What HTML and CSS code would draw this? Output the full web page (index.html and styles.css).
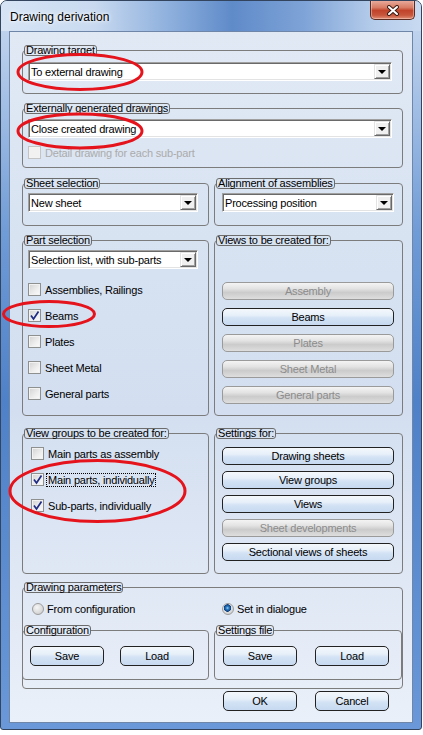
FILE: index.html
```html
<!DOCTYPE html>
<html lang="en">
  <head>
    <meta charset="utf-8">
    <link rel="stylesheet" href="styles.css">
    <title>Drawing derivation</title>
  </head>
  <body>
    <div class="window">
      <div class="titlebar">
        <span class="title">Drawing derivation</span>
        <div class="close">
          <svg width="14" height="11" viewBox="0 0 14 11">
            <path d="M3 2 L11 9 M11 2 L3 9" stroke="#3b1d15" stroke-width="4" stroke-linecap="round"/>
            <path d="M3 2 L11 9 M11 2 L3 9" stroke="#ffffff" stroke-width="2" stroke-linecap="round"/>
          </svg>
        </div>
      </div>

      <div class="client">
        <fieldset class="group target">
          <legend>Drawing target</legend>
          <div class="gbody">
            <div class="combo"><span>To external drawing</span><i class="drop"></i></div>
          </div>
        </fieldset>

        <fieldset class="group external">
          <legend>Externally generated drawings</legend>
          <div class="gbody">
            <div class="combo"><span>Close created drawing</span><i class="drop"></i></div>
            <label class="check disabled"><span class="box"></span>Detail drawing for each sub-part</label>
          </div>
        </fieldset>

        <div class="pair row-sheet">
          <fieldset class="group">
            <legend>Sheet selection</legend>
            <div class="gbody left">
              <div class="combo"><span>New sheet</span><i class="drop"></i></div>
            </div>
          </fieldset>
          <fieldset class="group">
            <legend>Alignment of assemblies</legend>
            <div class="gbody right">
              <div class="combo"><span>Processing position</span><i class="drop"></i></div>
            </div>
          </fieldset>
        </div>

        <div class="pair row-parts">
          <fieldset class="group">
            <legend>Part selection</legend>
            <div class="gbody left">
              <div class="combo"><span>Selection list, with sub-parts</span><i class="drop"></i></div>
              <div class="checks parts">
                <label class="check"><span class="box"></span>Assemblies, Railings</label>
                <label class="check"><span class="box on"><svg width="11" height="11" viewBox="0 0 11 11"><path d="M2 5.5 L4.5 9 L9.5 1.5" fill="none" stroke="#1f2c86" stroke-width="1.7"/></svg></span>Beams</label>
                <label class="check"><span class="box"></span>Plates</label>
                <label class="check"><span class="box"></span>Sheet Metal</label>
                <label class="check"><span class="box"></span>General parts</label>
              </div>
            </div>
          </fieldset>
          <fieldset class="group">
            <legend>Views to be created for:</legend>
            <div class="gbody right buttons views">
              <div class="btn off">Assembly</div>
              <div class="btn">Beams</div>
              <div class="btn off">Plates</div>
              <div class="btn off">Sheet Metal</div>
              <div class="btn off">General parts</div>
            </div>
          </fieldset>
        </div>

        <div class="pair row-groups">
          <fieldset class="group">
            <legend>View groups to be created for:</legend>
            <div class="gbody left wide">
              <div class="checks groups">
                <label class="check"><span class="box"></span>Main parts as assembly</label>
                <label class="check"><span class="box on"><svg width="11" height="11" viewBox="0 0 11 11"><path d="M2 5.5 L4.5 9 L9.5 1.5" fill="none" stroke="#1f2c86" stroke-width="1.7"/></svg></span><span class="focus">Main parts, individually</span></label>
                <label class="check"><span class="box on"><svg width="11" height="11" viewBox="0 0 11 11"><path d="M2 5.5 L4.5 9 L9.5 1.5" fill="none" stroke="#1f2c86" stroke-width="1.7"/></svg></span>Sub-parts, individually</label>
              </div>
            </div>
          </fieldset>
          <fieldset class="group">
            <legend>Settings for:</legend>
            <div class="gbody right buttons settings">
              <div class="btn">Drawing sheets</div>
              <div class="btn">View groups</div>
              <div class="btn">Views</div>
              <div class="btn off">Sheet developments</div>
              <div class="btn">Sectional views of sheets</div>
            </div>
          </fieldset>
        </div>

        <fieldset class="group params">
          <legend>Drawing parameters</legend>
          <div class="gbody">
            <div class="radios">
              <label class="opt"><span class="radio"></span>From configuration</label>
              <label class="opt"><span class="radio on"></span>Set in dialogue</label>
            </div>
            <div class="pair sub">
              <fieldset class="group">
                <legend>Configuration</legend>
                <div class="gbody pairbtns first">
                  <div class="btn big">Save</div>
                  <div class="btn big">Load</div>
                </div>
              </fieldset>
              <fieldset class="group">
                <legend>Settings file</legend>
                <div class="gbody pairbtns">
                  <div class="btn big">Save</div>
                  <div class="btn big">Load</div>
                </div>
              </fieldset>
            </div>
          </div>
        </fieldset>

        <div class="pair footer">
          <div></div>
          <div class="pairbtns">
            <div class="btn big">OK</div>
            <div class="btn big">Cancel</div>
          </div>
        </div>
      </div>
    </div>

    <!-- red hand-drawn marks over the dialog -->
    <svg class="marks" width="423" height="735" viewBox="0 0 423 735">
      <g fill="none" stroke="#e5131b" stroke-width="3">
        <ellipse cx="80" cy="72" rx="62" ry="17.5"/>
        <ellipse cx="80" cy="131" rx="62" ry="17"/>
        <ellipse cx="49" cy="314" rx="45.5" ry="12.5"/>
        <ellipse cx="97.5" cy="491" rx="87.5" ry="30.5"/>
      </g>
    </svg>
  </body>
</html>
```

FILE: styles.css
```css
body{
  margin: 0;
  background: #ffffff;
  font-family: "Liberation Sans", Arial, sans-serif;
  font-size: 11px;
  letter-spacing: -0.2px;
  color: #000000;
}
.window{
  width: 422px;
  height: 730px;
  box-sizing: border-box;
  border: 1px solid #33445e;
  border-radius: 7px 7px 3px 3px;
  background: linear-gradient(#c9daef 0, #b4cbea 8%, #6f9bd6 32%, #4f81c8 55%, #6a98d8 100%);
  display: flex;
  flex-direction: column;
  overflow: hidden;
}
.titlebar{
  height: 30px;
  flex: none;
  display: flex;
  align-items: flex-start;
  justify-content: space-between;
  background: linear-gradient(to right, #d6e4f5 0%, #c9daf0 22%, #8eb0dd 40%, #5f8bc9 55%, #7ea3d7 72%, #b3cbea 88%, #c8daf1 100%);
}
.title{
  font-size: 12px;
  letter-spacing: 0;
  padding: 9px 0 0 9px;
  text-shadow: 0 0 6px #ffffff, 0 0 3px #ffffff;
}
.close{
  width: 45px;
  height: 20px;
  margin-right: 6px;
  margin-top: -1px;
  box-sizing: border-box;
  border: 1px solid #5a2b20;
  border-top: none;
  border-radius: 0 0 5px 5px;
  background: linear-gradient(#eab0a2 0%, #d87b64 40%, #c1432a 55%, #c8563c 80%, #e08f76 100%);
  box-shadow: inset 0 0 0 1px rgba(255,220,210,.45);
  display: flex;
  align-items: center;
  justify-content: center;
  padding-top: 2px;
}
.client{
  flex: 1;
  margin: 0 8px 6px 8px;
  border: 1px solid #6f86a8;
  background: linear-gradient(#e1e9f5 0%, #d6e2f1 35%, #d3dff0 55%, #e0e8f5 80%, #eaf0f9 100%);
  padding: 13px 9px 0 12px;
}

/* group boxes */
.group{
  margin: 0;
  padding: 0;
  min-width: 0;
  border: 1px solid #7c7c7c;
  border-radius: 4px;
}
.group legend{
  margin-left: 1px;
  padding: 0 1px;
  border: 1px solid #6c6c6c;
  border-radius: 3px;
  line-height: 9px;
  font-size: 11px;
}
.gbody{
  padding: 0 10px 0 5px;
}
.gbody.right{
  padding: 0 8px 0 7px;
}
.gbody.wide{
  padding-left: 8px;
}
.target .gbody{
  padding-top: 6px;
  padding-bottom: 12px;
}
.external{
  margin-top: 9px;
}
.external .gbody{
  padding-top: 5px;
  padding-bottom: 8px;
}
.external .check{
  margin-top: 8px;
}
.pair{
  display: grid;
  grid-template-columns: 187px 1fr;
  column-gap: 5px;
}
.row-sheet{
  margin-top: 10px;
}
.row-sheet .gbody{
  padding-top: 4px;
  padding-bottom: 13px;
}
.row-parts{
  margin-top: 9px;
}
.row-parts .left{
  padding-top: 4px;
  padding-bottom: 15px;
}
.row-groups{
  margin-top: 12px;
}
.row-groups .gbody{
  padding-top: 8px;
}
.row-groups .settings{
  padding-bottom: 12px;
}

/* combobox */
.combo{
  height: 19px;
  box-sizing: border-box;
  border: 1px solid;
  border-color: #a0a0a0 #ffffff #ffffff #a0a0a0;
  box-shadow: inset 1px 1px 0 #6a6a6a, inset -1px -1px 0 #e3e3e3;
  background: #ffffff;
  display: flex;
  align-items: center;
  padding-left: 2px;
}
.drop{
  margin-left: auto;
  margin-right: 1px;
  width: 16px;
  height: 15px;
  box-sizing: border-box;
  border: 1px solid;
  border-color: #e3e3e3 #696969 #696969 #e3e3e3;
  box-shadow: inset 1px 1px 0 #ffffff, inset -1px -1px 0 #a0a0a0;
  background: #f0f0f0;
  display: flex;
  align-items: center;
  justify-content: center;
}
.drop::after{
  content: "";
  border-left: 4px solid transparent;
  border-right: 4px solid transparent;
  border-top: 4px solid #000000;
  margin-top: 1px;
}

/* checkboxes */
.checks{
  display: flex;
  flex-direction: column;
}
.checks.parts{
  margin-top: 14px;
  gap: 13px;
}
.checks.groups{
  gap: 13px;
}
.check{
  display: flex;
  align-items: center;
  height: 13px;
  white-space: nowrap;
}
.box{
  width: 13px;
  height: 13px;
  flex: none;
  box-sizing: border-box;
  border: 1px solid #8e8f8f;
  background: linear-gradient(135deg, #d2d2d2 0%, #eeeeee 60%, #fbfbfb 100%);
  box-shadow: inset 0 0 0 1px #f2f2f2;
  margin-right: 4px;
  display: flex;
  align-items: center;
  justify-content: center;
}
.box svg{
  display: block;
}
.check.disabled{
  color: #ababab;
}
.check.disabled .box{
  border-color: #c4c4c4;
  background: #f1f1f1;
}
.focus{
  outline: 1px dotted #000000;
  outline-offset: 0;
  padding: 0 1px;
  margin-left: -1px;
}

/* buttons */
.buttons{
  display: flex;
  flex-direction: column;
}
.gbody.views{
  padding-top: 36px;
  gap: 8px;
}
.gbody.settings{
  gap: 6px;
}
.btn{
  height: 18px;
  box-sizing: border-box;
  border: 1px solid #222222;
  border-radius: 5px;
  background: linear-gradient(#f4f8fc 0%, #e6eff9 40%, #d4e3f5 55%, #c6d9f0 100%);
  display: flex;
  align-items: center;
  justify-content: center;
  white-space: nowrap;
}
.btn.off{
  border-color: #9a9a9a;
  background: linear-gradient(#f4f4f4 0%, #e3e3e3 35%, #cbcbcb 60%, #dedede 100%);
  color: #8c8c8c;
}
.btn.big{
  width: 74px;
  height: 20px;
}

/* drawing parameters */
.params{
  margin-top: 8px;
}
.params > .gbody{
  padding: 10px 0 8px 0;
}
.radios{
  display: grid;
  grid-template-columns: 190px 1fr;
  padding-left: 9px;
}
.opt{
  display: flex;
  align-items: center;
  height: 12px;
  white-space: nowrap;
}
.radio{
  width: 12px;
  height: 12px;
  flex: none;
  box-sizing: border-box;
  border-radius: 50%;
  border: 1px solid #9c9c9c;
  background: radial-gradient(circle at 40% 35%, #f6f6f6 0, #dadada 60%, #c4c4c4 100%);
  margin-right: 3px;
}
.radio.on{
  background: radial-gradient(circle at 45% 40%, #9fd2f6 0, #2a7cc4 1.5px, #0d3e7c 3.5px, rgba(13,62,124,0) 4px), radial-gradient(circle at 40% 35%, #f6f6f6 0, #dadada 60%, #c4c4c4 100%);
}
.sub{
  margin: 10px 0 0 -1px;
}
.pairbtns{
  display: flex;
  gap: 18px;
  padding: 10px 0 13px 8px;
}
.pairbtns.first{
  padding-left: 7px;
  gap: 16px;
}
.footer{
  margin-top: 2px;
  margin-left: 1px;
}
.footer .pairbtns{
  padding: 0 0 0 8px;
}

.marks{
  position: absolute;
  top: 0;
  left: 0;
  pointer-events: none;
}
```
